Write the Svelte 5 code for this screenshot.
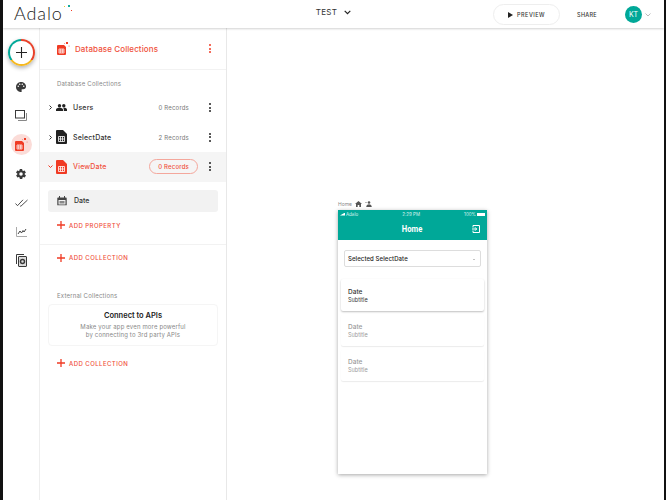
<script>
  const rail = ['palette', 'screens', 'db', 'gear', 'checks', 'chart', 'docs'];
  const collections = [
    { name: 'Users', records: '0 Records', icon: 'users' },
    { name: 'SelectDate', records: '2 Records', icon: 'sheet' },
    { name: 'ViewDate', records: '0 Records', icon: 'sheet', open: true }
  ];
  const items = [
    { title: 'Date', sub: 'Subtitle', first: true },
    { title: 'Date', sub: 'Subtitle' },
    { title: 'Date', sub: 'Subtitle' }
  ];
</script>

{#snippet sheet(color, w = 11, h = 14)}
  <svg width={w} height={h} viewBox="0 0 11 14">
    <path d="M1 0h6l4 4v9a1 1 0 0 1-1 1H1a1 1 0 0 1-1-1V1a1 1 0 0 1 1-1z" fill={color} />
    <path d="M2.500 6.500h6v5h-6zM4.500 6.500v5M6.500 6.500v5M2.500 9h6" fill="none" stroke="#fff" stroke-width=".8" />
  </svg>
{/snippet}

{#snippet dbIcon(w, h)}
  <svg width={w} height={h} viewBox="0 0 13 13">
    <path d="M1 3h6l2 2v7a1 1 0 0 1-1 1H1a1 1 0 0 1-1-1V4a1 1 0 0 1 1-1z" fill="#f03b24" />
    <path d="M2 7h5v4H2zM3.700 7v4M5.400 7v4M2 9h5" fill="none" stroke="#fff" stroke-width=".7" />
    <rect x="9" y="0" width="2" height="2" fill="#f03b24" />
    <rect x="7" y="1" width="1" height="1" fill="#f6a19a" />
    <rect x="11.500" y="3.500" width="1.200" height="1.200" fill="#f6a19a" />
  </svg>
{/snippet}

{#snippet dots(color = '#222')}
  <span class="dots" style:color={color}><i></i><i></i><i></i></span>
{/snippet}

{#snippet plus()}
  <svg width="8" height="8" viewBox="0 0 8 8"><path d="M4 0v8M0 4h8" stroke="#f03b24" stroke-width="1.300" /></svg>
{/snippet}

{#snippet railIcon(name)}
  {#if name === 'palette'}
    <svg width="12" height="12" viewBox="0 0 24 24"><path fill="#3a3a3a" d="M12 2C6.500 2 2 6.500 2 12s4.500 10 10 10c.9 0 1.700-.7 1.700-1.700 0-.4-.2-.8-.4-1.100-.3-.3-.4-.7-.4-1.100 0-.9.7-1.700 1.700-1.700h2c3 0 5.500-2.500 5.500-5.500C22 5.900 17.500 2 12 2zM6.500 12a1.500 1.500 0 1 1 0-3 1.500 1.500 0 0 1 0 3zm3-4a1.500 1.500 0 1 1 0-3 1.500 1.500 0 0 1 0 3zm5 0a1.500 1.500 0 1 1 0-3 1.500 1.500 0 0 1 0 3zm3 4a1.500 1.500 0 1 1 0-3 1.500 1.500 0 0 1 0 3z" /></svg>
  {:else if name === 'screens'}
    <svg width="12" height="11" viewBox="0 0 12 11" fill="none" stroke="#3a3a3a"><rect x=".5" y=".5" width="9" height="7.500" /><path d="M11.500 3v7.500H3" stroke="#888" /></svg>
  {:else if name === 'db'}
    <span class="db-chip">{@render dbIcon(13, 13)}</span>
  {:else if name === 'gear'}
    <svg width="12" height="12" viewBox="0 0 24 24"><path fill="#3a3a3a" fill-rule="evenodd" d="M19.400 13a7.500 7.500 0 0 0 0-2l2.100-1.600a.5.5 0 0 0 .1-.6l-2-3.500a.5.5 0 0 0-.6-.2l-2.500 1a7.300 7.300 0 0 0-1.700-1l-.4-2.700a.5.5 0 0 0-.5-.4h-4a.5.5 0 0 0-.5.400l-.4 2.700a7.300 7.300 0 0 0-1.700 1l-2.500-1a.5.5 0 0 0-.6.200l-2 3.500a.5.5 0 0 0 .1.600L4.600 11a7.500 7.500 0 0 0 0 2l-2.100 1.600a.5.5 0 0 0-.1.600l2 3.500c.1.200.4.300.6.200l2.500-1a7.300 7.300 0 0 0 1.700 1l.4 2.700c0 .2.300.4.500.4h4c.2 0 .5-.2.500-.4l.4-2.700a7.300 7.300 0 0 0 1.700-1l2.500 1c.2.100.5 0 .6-.2l2-3.500a.5.5 0 0 0-.1-.6zM12 15.500a3.500 3.500 0 1 1 0-7 3.500 3.500 0 0 1 0 7z" /></svg>
  {:else if name === 'checks'}
    <svg width="13" height="8" viewBox="0 0 13 8" fill="none" stroke="#3a3a3a" stroke-width=".9"><path d="M.5 4.500l2 2.200L8 .8M5 6.700l.8.6L12.500 1" /></svg>
  {:else if name === 'chart'}
    <svg width="11" height="10" viewBox="0 0 11 10" fill="none"><path d="M.5 0v9.500H11" stroke="#aaa" /><path d="M2 7l2-3 1.500 2L7 3.500 8 5l2-3" stroke="#444" /></svg>
  {:else}
    <svg width="11" height="13" viewBox="0 0 11 13" fill="none" stroke="#3a3a3a"><path d="M.5 10V.5H8" /><rect x="2.500" y="2.500" width="8" height="10" rx=".5" fill="#ddd" /><circle cx="6.500" cy="7.500" r="2" stroke-width="1.500" /></svg>
  {/if}
{/snippet}

<div class="shell">
  <header class="top">
    <div class="logo">
      <span>Adalo</span>
      <svg class="logo-dots" width="9" height="8" viewBox="0 0 9 8">
        <rect x="0" y="1" width="1" height="1" fill="#f5c033" />
        <rect x="4" y="0" width="2" height="2" fill="#18a999" />
        <rect x="7" y="5" width="1" height="1" fill="#f03b24" />
      </svg>
    </div>
    <div class="title">
      <span>TEST</span>
      <svg width="7" height="5" viewBox="0 0 7 5" fill="none" stroke="#222" stroke-width="1.200"><path d="M.7.8l2.800 2.800L6.300.8" /></svg>
    </div>
    <div class="actions">
      <button class="preview">
        <svg width="5" height="6" viewBox="0 0 5 6"><path d="M0 0l5 3-5 3z" fill="#222" /></svg>
        PREVIEW
      </button>
      <span class="share">SHARE</span>
      <span class="avatar">KT</span>
      <svg width="6" height="4" viewBox="0 0 6 4" fill="none" stroke="#bbb"><path d="M.5.500L3 3 5.500.500" /></svg>
    </div>
  </header>

  <div class="body">
    <nav class="rail">
      <button class="add">
        <span class="add-inner">
          <svg width="11" height="11" viewBox="0 0 11 11"><path d="M5.500 0v11M0 5.500h11" stroke="#222" stroke-width="1.100" /></svg>
        </span>
      </button>
      <div class="rail-icons">
        {#each rail as name}
          <div class="rail-item">{@render railIcon(name)}</div>
        {/each}
      </div>
    </nav>

    <aside class="panel">
      <div class="panel-head">
        {@render dbIcon(13, 13)}
        <h1>Database Collections</h1>
        {@render dots('#f03b24')}
      </div>

      <p class="section">Database Collections</p>
      {#each collections as c}
        <div class="row" class:open={c.open}>
          <svg class="caret" width="5" height="5" viewBox="0 0 5 5" fill="none" stroke={c.open ? '#f03b24' : '#333'}>
            {#if c.open}<path d="M.5 1.500L2.500 3.500 4.500 1.500" />{:else}<path d="M1.500.500L3.500 2.500 1.500 4.500" />{/if}
          </svg>
          <span class="row-icon">
            {#if c.icon === 'users'}
              <svg width="11" height="7" viewBox="0 0 11 7"><circle cx="3.500" cy="1.800" r="1.700" fill="#222" /><circle cx="7.800" cy="1.800" r="1.700" fill="#222" /><path d="M0 7V5.500C0 4.300 2 3.800 3.500 3.800S7 4.300 7 5.500V7zM7.800 7V5.300c0-.6-.3-1-.7-1.400 2-.3 3.900.4 3.900 1.600V7z" fill="#222" /></svg>
            {:else}
              {@render sheet(c.open ? '#f03b24' : '#222')}
            {/if}
          </span>
          <span class="row-name">{c.name}</span>
          <span class="records">{c.records}</span>
          {@render dots()}
        </div>
      {/each}

      <div class="prop">
        <svg width="10" height="10" viewBox="0 0 10 10"><path d="M1 1.500h8a.7.7 0 0 1 .7.700v7H.3v-7A.7.7 0 0 1 1 1.500z" fill="#444" /><path d="M2.500 0v2M7.500 0v2" stroke="#444" /><rect x="1.500" y="4" width="7" height="4.500" fill="#f2f2f2" /><rect x="2.500" y="5" width="5" height="2.500" fill="#888" /></svg>
        <span>Date</span>
      </div>
      <div class="add-link first">{@render plus()}<span>ADD PROPERTY</span></div>
      <div class="add-link border">{@render plus()}<span>ADD COLLECTION</span></div>

      <p class="section external">External Collections</p>
      <div class="api">
        <strong>Connect to APIs</strong>
        <p>Make your app even more powerful<br />by connecting to 3rd party APIs</p>
      </div>
      <div class="add-link last">{@render plus()}<span>ADD COLLECTION</span></div>
    </aside>

    <main class="canvas">
      <div class="device">
        <div class="device-label">
          <span>Home</span>
          <svg width="7" height="6" viewBox="0 0 7 6"><path d="M3.500 0L7 3H6v3H4.300V4H2.700v2H1V3H0z" fill="#555" /></svg>
          <svg width="7" height="6" viewBox="0 0 7 6"><circle cx="4" cy="1.500" r="1.300" fill="#555" /><path d="M1.500 6c0-1.700 1-2.500 2.500-2.500S6.500 4.300 6.500 6zM0 1.500h2" fill="#555" stroke="#555" stroke-width=".4" /></svg>
        </div>
        <div class="phone">
          <div class="status">
            <span class="st-left"><i class="signal"></i>Adalo</span>
            <span>2:29 PM</span>
            <span class="st-right">100%<i class="battery"></i></span>
          </div>
          <div class="appbar">
            <span class="appbar-title">Home</span>
            <svg class="exit" width="8" height="8" viewBox="0 0 8 8" fill="none" stroke="#fff"><path d="M1 2.500V.5h6.500v7H1V5.500M0 4h4.500M3 2.300L4.700 4 3 5.700" /></svg>
          </div>
          <div class="select">
            <span>Selected SelectDate</span>
            <i class="select-caret"></i>
          </div>
          <div class="list">
            {#each items as item}
              <div class="item" class:first={item.first}>
                <span class="item-title">{item.title}</span>
                <span class="item-sub">{item.sub}</span>
              </div>
            {/each}
          </div>
        </div>
      </div>
    </main>
  </div>
</div>

<style>
  :global(body) {
    margin: 0;
    background: #fff;
    overflow: hidden;
  }
  .shell {
    width: 666px;
    height: 500px;
    display: flex;
    flex-direction: column;
    overflow: hidden;
    font-family: Inter, "Noto Sans", sans-serif;
    color: #333;
    box-sizing: border-box;
    border-left: 3px solid #111;
    border-right: 2px solid #111;
  }
  button {
    font: inherit;
    padding: 0;
    border: none;
    background: none;
  }
  .top {
    height: 28px;
    flex: none;
    display: grid;
    grid-template-columns: 1fr auto 1fr;
    align-items: center;
    background: #fff;
    box-shadow: 0 1px 2px rgba(0, 0, 0, 0.18);
    position: relative;
    z-index: 2;
  }
  .logo {
    padding: 0 0 3px 11px;
    display: flex;
    font-family: Lato, "Open Sans", sans-serif;
    font-size: 18px;
    letter-spacing: 0.9px;
    color: #222;
    font-weight: 300;
  }
  .logo-dots {
    margin: 3px 0 0 1px;
  }
  .title {
    display: flex;
    align-items: center;
    gap: 7px;
    font-size: 8px;
    letter-spacing: 0.3px;
    padding-bottom: 4px;
  }
  .actions {
    display: flex;
    align-items: center;
    justify-content: flex-end;
    padding-right: 13px;
    padding-top: 1px;
  }
  .preview {
    width: 67px;
    height: 21px;
    border: 1px solid #eee;
    border-radius: 11px;
    display: flex;
    align-items: center;
    justify-content: center;
    gap: 4px;
    font-size: 5.500px;
    font-weight: 500;
    letter-spacing: 0.5px;
    color: #333;
  }
  .share {
    font-size: 5.500px;
    font-weight: 500;
    letter-spacing: 0.3px;
    margin: 0 28px 0 17px;
  }
  .avatar {
    width: 17px;
    height: 17px;
    border-radius: 50%;
    background: #00a898;
    color: #fff;
    font-size: 7px;
    display: grid;
    place-items: center;
    margin-right: 3px;
  }
  .body {
    flex: 1;
    display: flex;
    min-height: 0;
  }
  .rail {
    width: 36px;
    flex: none;
    border-right: 1px solid #eee;
    display: flex;
    flex-direction: column;
    align-items: center;
    padding-top: 11px;
    box-sizing: content-box;
  }
  .add {
    width: 27px;
    height: 27px;
    border-radius: 50%;
    background: conic-gradient(#e8412a 0 125deg, #f5b81f 125deg 235deg, #00a898 235deg 360deg);
    display: grid;
    place-items: center;
    box-shadow: 0 2px 4px rgba(0, 0, 0, 0.3);
    flex: none;
  }
  .add-inner {
    width: 23px;
    height: 23px;
    border-radius: 50%;
    background: #fff;
    display: grid;
    place-items: center;
  }
  .rail-icons {
    margin-top: 6px;
    display: flex;
    flex-direction: column;
  }
  .rail-item {
    height: 29px;
    display: grid;
    place-items: center;
  }
  .db-chip {
    width: 21px;
    height: 21px;
    border-radius: 50%;
    background: #fbdcd8;
    display: grid;
    place-items: center;
  }
  .panel {
    width: 186px;
    flex: none;
    border-right: 1px solid #e8e8e8;
    display: flex;
    flex-direction: column;
  }
  .panel-head {
    height: 41px;
    flex: none;
    display: flex;
    align-items: center;
    padding: 0 15px 0 17px;
    border-bottom: 1px solid #f2f2f2;
  }
  h1 {
    margin: 0 0 0 5px;
    flex: 1;
    font-size: 8px;
    font-weight: 500;
    letter-spacing: 0.1px;
    color: #f0503c;
  }
  .dots {
    display: flex;
    flex-direction: column;
    gap: 1.500px;
    width: 2px;
  }
  .dots i {
    width: 2px;
    height: 2px;
    background: currentColor;
    border-radius: 50%;
  }
  .section {
    margin: 0;
    padding: 10px 0 0 17px;
    height: 13px;
    font-size: 6px;
    letter-spacing: 0.2px;
    color: #888;
  }
  .row {
    height: 29.500px;
    flex: none;
    display: flex;
    align-items: center;
    padding: 0 15px 0 8px;
    font-size: 7px;
  }
  .row.open {
    background: #f5f5f5;
    color: #f0503c;
  }
  .row.open .row-name {
    color: #f0503c;
  }
  .row-icon {
    width: 11px;
    margin: 0 6px 0 3px;
    display: flex;
    justify-content: center;
  }
  .row-name {
    flex: 1;
    font-weight: 500;
    letter-spacing: 0.2px;
    color: #333;
  }
  .records {
    font-size: 6px;
    letter-spacing: 0.2px;
    color: #777;
    margin-right: 20px;
  }
  .row.open .records {
    border: 1px solid #f4a79c;
    border-radius: 8px;
    padding: 3px 8px;
    color: #f0503c;
    font-weight: 500;
    margin-right: 11px;
  }
  .prop {
    margin: 8px 8px 0;
    height: 22px;
    flex: none;
    border-radius: 3px;
    background: #f2f2f2;
    display: flex;
    align-items: center;
    gap: 7px;
    padding-left: 9px;
    font-size: 7px;
    font-weight: 500;
  }
  .add-link {
    display: flex;
    align-items: center;
    gap: 4px;
    padding-left: 17px;
    font-size: 6px;
    font-weight: 500;
    letter-spacing: 0.45px;
    color: #f0503c;
    flex: none;
  }
  .add-link.first {
    height: 27px;
    padding-bottom: 5px;
  }
  .add-link.border {
    height: 26px;
    border-top: 1px solid #f2f2f2;
  }
  .add-link.last {
    height: 35px;
  }
  .external {
    margin-top: 13px;
    height: 11px;
    padding-top: 8px;
  }
  .api {
    margin: 1px 8px 0;
    height: 40px;
    flex: none;
    border: 1px solid #f5f5f5;
    border-radius: 4px;
    display: flex;
    flex-direction: column;
    align-items: center;
    justify-content: center;
    text-align: center;
  }
  .api strong {
    font-size: 7.500px;
    font-weight: 600;
    color: #222;
  }
  .api p {
    margin: 3px 0 0;
    font-size: 6px;
    line-height: 8px;
    color: #888;
    letter-spacing: 0.15px;
  }
  .canvas {
    flex: 1;
    padding: 171px 0 0 111px;
    min-width: 0;
  }
  .device {
    width: 149px;
  }
  .device-label {
    height: 10px;
    display: flex;
    align-items: center;
    gap: 3px;
    font-size: 5px;
    color: #888;
    padding-bottom: 1px;
  }
  .phone {
    height: 264px;
    box-sizing: border-box;
    background: #fff;
    box-shadow: 0 1px 4px rgba(0, 0, 0, 0.35);
    display: flex;
    flex-direction: column;
  }
  .status {
    height: 8px;
    background: #00a898;
    color: #d8f3ef;
    font-size: 4.500px;
    display: flex;
    align-items: center;
    justify-content: space-between;
    padding: 0 2px;
  }
  .st-left, .st-right {
    display: flex;
    align-items: center;
    gap: 1px;
  }
  .signal {
    width: 5px;
    height: 3px;
    background: #fff;
    clip-path: polygon(0 100%, 100% 0, 100% 100%);
  }
  .battery {
    width: 8px;
    height: 3px;
    background: #fff;
  }
  .appbar {
    height: 22px;
    background: #00a898;
    position: relative;
    display: grid;
    place-items: center;
  }
  .appbar-title {
    color: #fff;
    font-size: 9px;
    font-weight: 700;
    font-family: Roboto, sans-serif;
    transform: scaleX(0.85);
  }
  .exit {
    position: absolute;
    right: 7px;
    top: 7px;
  }
  .select {
    margin: 10px 6px 0;
    height: 17px;
    flex: none;
    border: 1px solid #ddd;
    border-radius: 2px;
    display: flex;
    align-items: center;
    justify-content: space-between;
    padding: 0 5px 0 3px;
    font-size: 6px;
    font-weight: 500;
    color: #222;
    letter-spacing: 0.1px;
    box-sizing: border-box;
  }
  .select-caret {
    border: 1.500px solid transparent;
    border-top-color: #888;
    margin-top: 2px;
  }
  .list {
    margin: 12px 3px 0;
    display: flex;
    flex-direction: column;
    gap: 3px;
  }
  .item {
    height: 32px;
    box-sizing: border-box;
    display: flex;
    flex-direction: column;
    justify-content: center;
    padding-left: 7px;
    gap: 1px;
    border-radius: 2px;
    color: #999;
    box-shadow: 0 1px 1px rgba(0, 0, 0, 0.08);
  }
  .item.first {
    color: #333;
    box-shadow: 0 1px 2px rgba(0, 0, 0, 0.25);
  }
  .item-title {
    font-size: 6.500px;
    font-weight: 500;
  }
  .item-sub {
    font-size: 5.500px;
  }
</style>
